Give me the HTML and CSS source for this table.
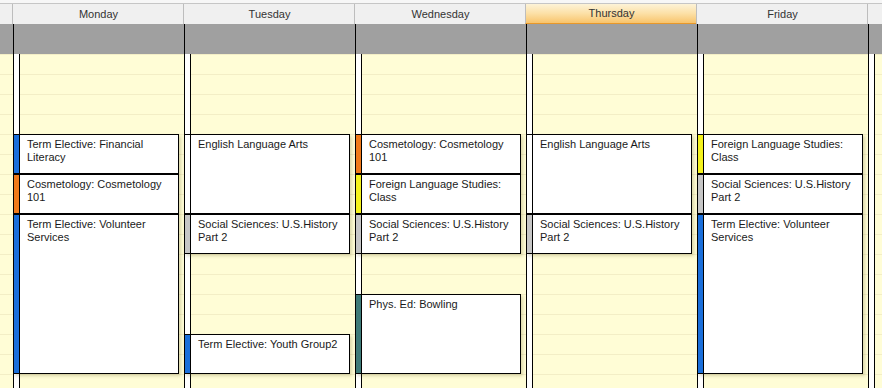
FILE: index.html
```html
<!DOCTYPE html>
<html>
<head>
<meta charset="utf-8">
<link rel="stylesheet" href="styles.css">
</head>
<body>
<div class="scheduler">
  <div class="topline"></div>
  <div class="header">
    <div class="gutter"></div>
    <div class="day">Monday</div>
    <div class="day">Tuesday</div>
    <div class="day">Wednesday</div>
    <div class="day today">Thursday</div>
    <div class="day">Friday</div>
    <div class="day rest"></div>
  </div>
  <div class="allday">
    <div class="gutter"></div>
    <div class="band"></div>
    <div class="band"></div>
    <div class="band"></div>
    <div class="band"></div>
    <div class="band"></div>
    <div class="band"></div>
  </div>
  <div class="body">
    <div class="gutter lines"></div>
    <div class="col lines">
      <div class="event blue" style="grid-row: 5 / span 2">Term Elective: Financial Literacy</div>
      <div class="event orange" style="grid-row: 7 / span 2">Cosmetology: Cosmetology 101</div>
      <div class="event blue" style="grid-row: 9 / span 8">Term Elective: Volunteer Services</div>
    </div>
    <div class="col lines">
      <div class="event white" style="grid-row: 5 / span 4">English Language Arts</div>
      <div class="event gray" style="grid-row: 9 / span 2">Social Sciences: U.S.History Part 2</div>
      <div class="event blue" style="grid-row: 15 / span 2">Term Elective: Youth Group2</div>
    </div>
    <div class="col lines">
      <div class="event orange" style="grid-row: 5 / span 2">Cosmetology: Cosmetology 101</div>
      <div class="event yellow" style="grid-row: 7 / span 2">Foreign Language Studies: Class</div>
      <div class="event gray" style="grid-row: 9 / span 2">Social Sciences: U.S.History Part 2</div>
      <div class="event teal" style="grid-row: 13 / span 4">Phys. Ed: Bowling</div>
    </div>
    <div class="col lines">
      <div class="event white" style="grid-row: 5 / span 4">English Language Arts</div>
      <div class="event gray" style="grid-row: 9 / span 2">Social Sciences: U.S.History Part 2</div>
    </div>
    <div class="col lines">
      <div class="event yellow" style="grid-row: 5 / span 2">Foreign Language Studies: Class</div>
      <div class="event gray" style="grid-row: 7 / span 2">Social Sciences: U.S.History Part 2</div>
      <div class="event blue" style="grid-row: 9 / span 8">Term Elective: Volunteer Services</div>
    </div>
    <div class="col lines"></div>
  </div>
</div>
</body>
</html>
```

FILE: styles.css
```css
html, body {
  margin: 0;
  padding: 0;
  background: #ffffff;
}

.scheduler {
  width: 882px;
  height: 388px;
  overflow: hidden;
  font-family: "Liberation Sans", Arial, sans-serif;
  font-size: 11px;
  color: #1a1a1a;
}

.topline {
  height: 3px;
  background: #f7f7f7;
  border-bottom: 1px solid #c6c6c6;
}

.header,
.allday,
.body {
  display: grid;
  grid-template-columns: 13px repeat(5, 171px) 1fr;
}

.header {
  height: 20px;
  background: #f0f0f0;
}

.day {
  border-left: 1px solid #bdbdbd;
  line-height: 20px;
  text-align: center;
  color: #333333;
  margin-left: -1px;
  background-clip: padding-box;
}

.day.today {
  background: linear-gradient(to bottom, #fdf3d8 0%, #fce0a6 50%, #f8c46c 100%);
  border-bottom: 1px solid #e8982a;
  line-height: 19px;
}

.allday {
  height: 30px;
  background: #a0a0a0;
}

.band {
  border-left: 1px solid #000000;
}

.body {
  height: 334px;
}

.lines {
  background-image: repeating-linear-gradient(to bottom, #f3eec6 0 1px, #fffdd6 1px 20px);
}

.col {
  background-image:
    linear-gradient(to right, #000 0 1px, #fff 1px 6px, #000 6px 7px, transparent 7px),
    repeating-linear-gradient(to bottom, #f3eec6 0 1px, #fffdd6 1px 20px);
  display: grid;
  grid-template-columns: 166px;
  grid-template-rows: repeat(17, 20px);
}

.event {
  box-sizing: border-box;
  border: 1px solid #000000;
  padding: 3px 6px 0 13px;
  line-height: 13px;
  overflow: hidden;
  box-shadow: 2px 2px 3px rgba(90, 80, 20, 0.22);
  --bar: #ffffff;
  background: linear-gradient(to right, var(--bar) 0 5px, #000 5px 6px, #fff 6px);
}

.blue { --bar: #1a6fdb; }
.orange { --bar: #f07a1a; }
.yellow { --bar: #f4f21c; }
.gray { --bar: #c6c6c6; }
.teal { --bar: #3e7a78; }
.white { --bar: #ffffff; }
```
